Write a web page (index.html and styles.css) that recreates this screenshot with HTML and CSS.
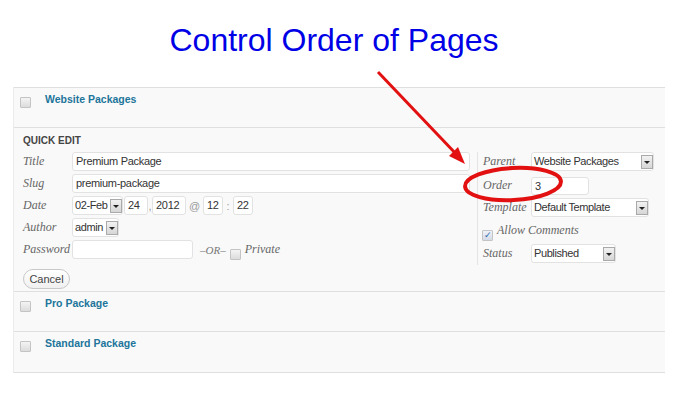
FILE: index.html
```html
<!DOCTYPE html>
<html>
	<head>
		<meta charset="utf-8">
		<title>Control Order of Pages</title>
		<link rel="stylesheet" href="styles.css">
	</head>
	<body>
		<h1 class="headline">Control Order of Pages</h1>

		<div class="pagelist">
			<div class="row">
				<span class="check"></span>
				<a class="rowtitle">Website Packages</a>
			</div>

			<div class="row quickedit">
				<div class="qe-head">QUICK EDIT</div>
				<div class="qe-cols">
					<div class="qe-left">
						<div class="line">
							<span class="lbl">Title</span>
							<span class="field wide">Premium Package</span>
						</div>
						<div class="line">
							<span class="lbl">Slug</span>
							<span class="field wide">premium-package</span>
						</div>
						<div class="line">
							<span class="lbl">Date</span>
							<span class="field sel w-month">02-Feb<i class="arr"></i></span>
							<span class="field w-day">24</span>
							<span class="sep">,</span>
							<span class="field w-year">2012</span>
							<span class="sep at">@</span>
							<span class="field w-hm">12</span>
							<span class="sep colon">:</span>
							<span class="field w-hm">22</span>
						</div>
						<div class="line">
							<span class="lbl">Author</span>
							<span class="field sel w-author">admin<i class="arr"></i></span>
						</div>
						<div class="line">
							<span class="lbl">Password</span>
							<span class="field w-pass"></span>
							<span class="or">&ndash;OR&ndash;</span>
							<span class="check small"></span>
							<span class="serif">Private</span>
						</div>
						<button class="cancel">Cancel</button>
					</div>

					<div class="qe-right">
						<div class="line">
							<span class="lbl">Parent</span>
							<span class="field sel w-parent">Website Packages<i class="arr"></i></span>
						</div>
						<div class="line order">
							<span class="lbl">Order</span>
							<span class="field w-order">3</span>
						</div>
						<div class="line">
							<span class="lbl">Template</span>
							<span class="field sel w-template">Default Template<i class="arr"></i></span>
						</div>
						<div class="line comments">
							<span class="check ticked">&#10003;</span>
							<span class="serif">Allow Comments</span>
						</div>
						<div class="line">
							<span class="lbl">Status</span>
							<span class="field sel w-status">Published<i class="arr"></i></span>
						</div>
					</div>
				</div>
			</div>

			<div class="row">
				<span class="check"></span>
				<a class="rowtitle">Pro Package</a>
			</div>
			<div class="row">
				<span class="check"></span>
				<a class="rowtitle">Standard Package</a>
			</div>
		</div>

		<!-- annotation drawn over the screenshot -->
		<svg class="marks" width="674" height="408" viewBox="0 0 674 408">
			<line x1="378" y1="72" x2="458" y2="156" stroke="#e21010" stroke-width="3"/>
			<polygon points="465,164 449,156 458,147" fill="#e21010"/>
			<ellipse cx="513" cy="184" rx="48" ry="16" fill="none" stroke="#e21010" stroke-width="4" transform="rotate(-3 513 184)"/>
		</svg>
	</body>
</html>
```

FILE: styles.css
```css
body {
	margin: 0;
	background: #fff;
	font-family: "Liberation Sans", Arial, sans-serif;
	color: #333;
	position: relative;
	width: 674px;
	height: 408px;
	overflow: hidden;
}

.headline {
	margin: 0;
	padding: 20px 6px 0 0;
	height: 42px;
	text-align: center;
	font-weight: normal;
	font-size: 32px;
	line-height: 40px;
	color: #0000e6;
}

.pagelist {
	margin: 25px 0 0 13px;
	width: 651px;
	border-bottom: 1px solid #dfdfdf;
	border-left: 1px solid #ececec;
}

.row {
	background: #f9f9f9;
	border-top: 1px solid #dfdfdf;
	height: 39px;
	display: flex;
	align-items: flex-start;
	padding-left: 6px;
}

.row + .row + .row + .row {
	height: 40px;
}

.row .check {
	margin-top: 9px;
}

.rowtitle {
	margin-left: 14px;
	margin-top: 5px;
	font-size: 10.5px;
	font-weight: bold;
	color: #21759b;
}

.check {
	display: inline-block;
	width: 9px;
	height: 9px;
	border: 1px solid #c4c4c4;
	background: linear-gradient(#f4f4f4, #dcdcdc);
	border-radius: 1px;
}

.quickedit {
	height: auto;
	display: block;
	padding: 6px 0 2px 9px;
}

.qe-head {
	font-size: 10px;
	font-weight: bold;
	line-height: 13px;
	color: #444;
	margin-bottom: 5px;
}

.qe-cols {
	display: flex;
}

.qe-left {
	width: 448px;
	display: flex;
	flex-direction: column;
	gap: 3px;
}

.qe-right {
	margin-left: 6px;
	padding-left: 5px;
	border-left: 1px solid #e4e4e4;
	height: 113px;
	display: flex;
	flex-direction: column;
	gap: 3px;
}

.line {
	display: flex;
	align-items: center;
	height: 19px;
}

.lbl {
	width: 49px;
	font-family: "Liberation Serif", Georgia, serif;
	font-style: italic;
	font-size: 12px;
	color: #666;
}

.qe-right .lbl {
	width: 48px;
}

.field {
	box-sizing: border-box;
	position: relative;
	height: 19px;
	border: 1px solid #e2e2e2;
	border-radius: 3px;
	background: #fff;
	padding: 0 3px;
	font-size: 11px;
	letter-spacing: -0.3px;
	line-height: 17px;
	color: #333;
	white-space: nowrap;
}

.wide { width: 398px; }
.w-month { width: 51px; }
.w-day { width: 24px; margin-left: 1px; }
.w-year { width: 34px; }
.w-hm { width: 20px; }
.w-author { width: 47px; }
.w-pass { width: 121px; }
.w-parent { width: 123px; }
.w-order { width: 58px; height: 18px; }
.w-template { width: 118px; }
.w-status { width: 85px; }

.sel {
	padding-left: 2px;
	letter-spacing: -0.4px;
}

.sep {
	width: 4px;
	text-align: center;
	font-size: 11px;
	color: #999;
}

.sep.at {
	width: 17px;
}

.sep.colon {
	width: 10px;
}

.arr {
	position: absolute;
	right: 0;
	top: 2px;
	width: 10px;
	height: 12px;
	border: 1px solid #aaa;
	background: linear-gradient(#f2f2f2, #d6d6d6);
}

.arr::after {
	content: "";
	position: absolute;
	left: 2px;
	top: 5px;
	border-left: 3px solid transparent;
	border-right: 3px solid transparent;
	border-top: 3px solid #222;
}

.or {
	margin: 0 4px 0 7px;
	font-family: "Liberation Serif", Georgia, serif;
	font-style: italic;
	font-size: 11px;
	color: #777;
}

.serif {
	margin-left: 4px;
	font-family: "Liberation Serif", Georgia, serif;
	font-style: italic;
	font-size: 12px;
	color: #666;
}

.order {
	margin-top: 2px;
}

.comments {
	height: 21px;
	margin-left: -1px;
}

.check.ticked {
	font-size: 9px;
	line-height: 9px;
	text-align: center;
	color: #2d5fa8;
	background: linear-gradient(#eef2f8, #d4dbe6);
}

.cancel {
	margin-top: 7px;
	align-self: flex-start;
	width: 47px;
	height: 20px;
	padding: 0;
	border: 1px solid #c8c8c8;
	border-radius: 10px;
	background: linear-gradient(#fff, #f0f0f0);
	font-family: "Liberation Sans", Arial, sans-serif;
	font-size: 11px;
	color: #444;
}

.marks {
	position: absolute;
	left: 0;
	top: 0;
	pointer-events: none;
}
```
